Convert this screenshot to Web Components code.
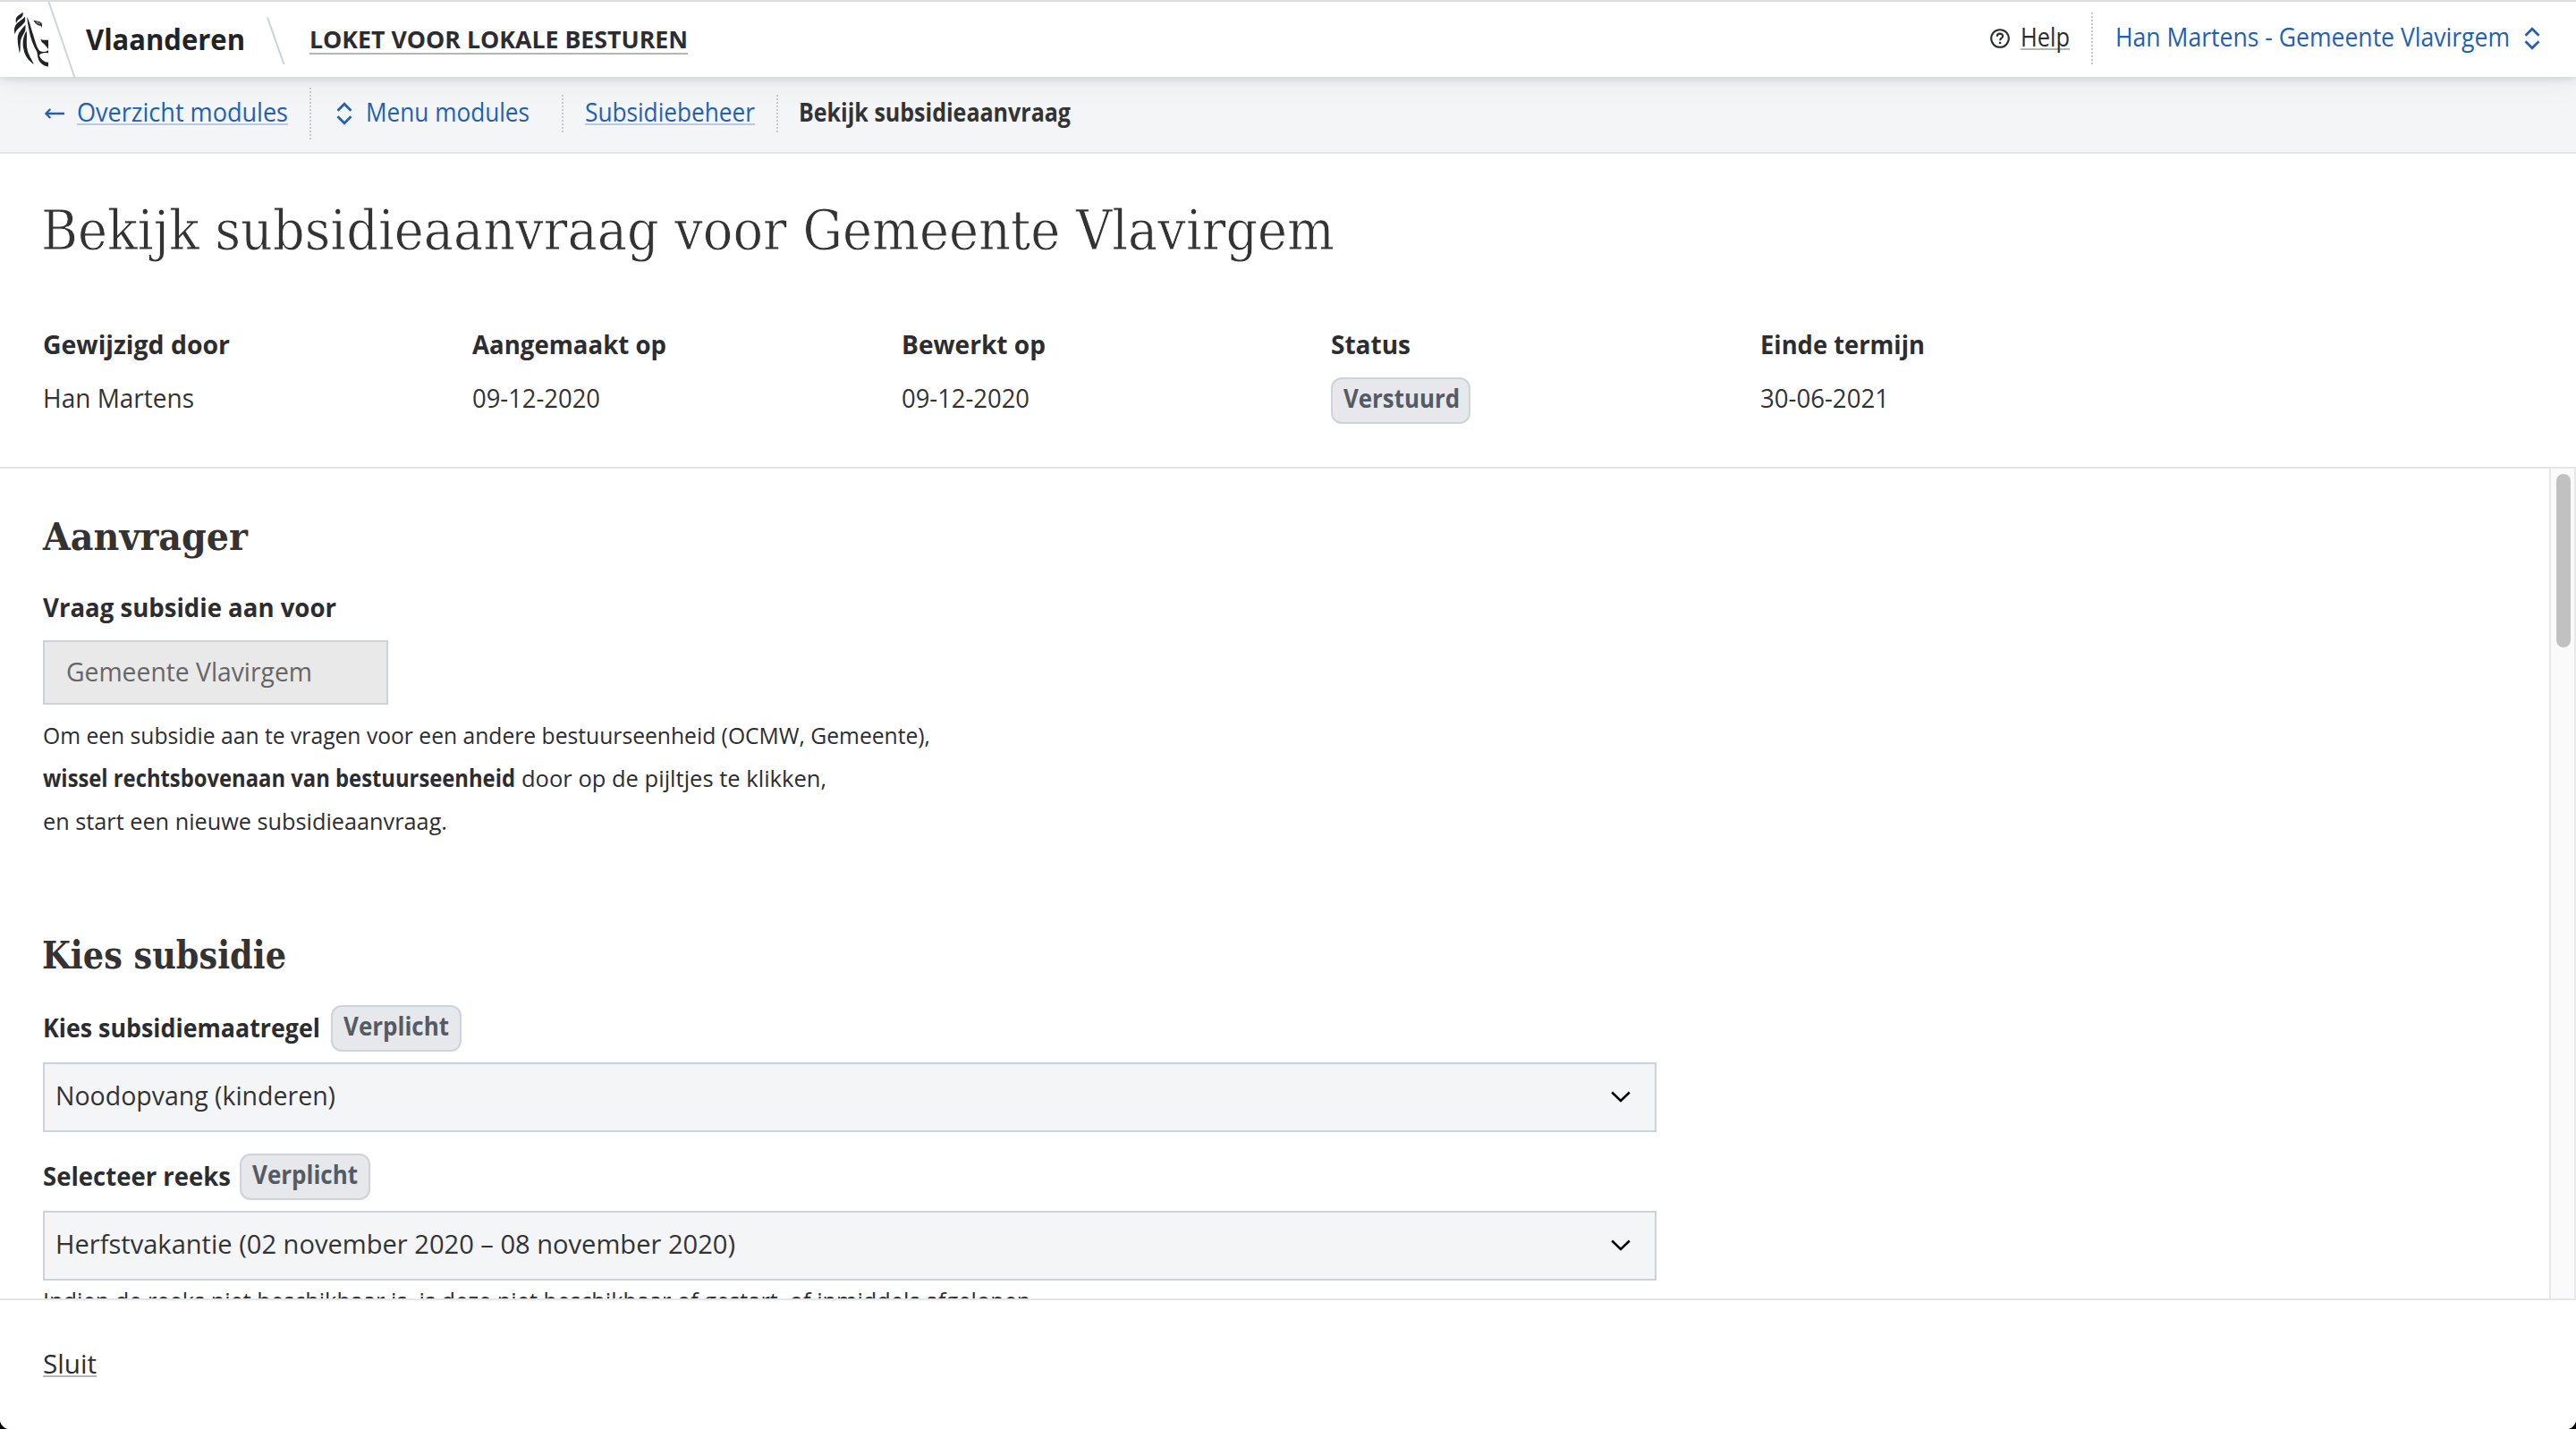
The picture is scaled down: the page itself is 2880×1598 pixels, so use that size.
<!DOCTYPE html>
<html lang="nl">
<head>
<meta charset="utf-8">
<title>Loket voor lokale besturen</title>
<style>
html,body{margin:0;background:#000}
body{font-family:"Open Sans","Noto Sans",sans-serif;color:#333}
</style>
</head>
<body>
<loket-app></loket-app>
<script>
const define = (name, html, extra) => {
  const t = document.createElement('template');
  t.innerHTML = html;
  customElements.define(name, class extends HTMLElement {
    constructor() {
      super();
      this.attachShadow({ mode: 'open' }).append(t.content.cloneNode(true));
    }
    connectedCallback() { if (extra) extra.call(this, this.shadowRoot); }
  });
};

/* One line of text set to a given advance width: w = width, s = font size, x = space before, y = space above */
define('fit-text', `<style>
:host{display:block;flex:none;height:40px;line-height:40px;font-size:29px;white-space:nowrap}
:host([b]){font-weight:700;color:#2b2d31}
:host([blue]){color:#2260b6}
:host([u]) span{text-decoration:underline;text-decoration-thickness:2px;text-underline-offset:var(--uo,2px);text-decoration-skip-ink:none;text-decoration-color:#b5b6b8}
:host([u][blue]) span{text-decoration-color:#b5cae8}
:host([serif]){font-family:"DejaVu Serif",serif;color:#333}
span{display:inline-block;transform-origin:0 50%}
</style><span><slot></slot></span>`, function (root) {
  const w = +this.getAttribute('w'), span = root.querySelector('span');
  if (this.hasAttribute('s')) this.style.fontSize = this.getAttribute('s') + 'px';
  if (this.hasAttribute('h')) this.style.height = this.style.lineHeight = this.getAttribute('h') + 'px';
  if (this.hasAttribute('x')) this.style.marginLeft = this.getAttribute('x') + 'px';
  if (this.hasAttribute('y')) this.style.marginTop = this.getAttribute('y') + 'px';
  this.style.width = w + 'px';
  span.style.transform = `scaleX(${w / span.getBoundingClientRect().width})`;
});

define('dotted-line', `<style>
:host{display:block;flex:none;width:2px;background:repeating-linear-gradient(#c6c9d0 0 2px,transparent 2px 4px)}
</style>`);

define('sort-icon', `<style>
:host{display:block;flex:none;width:18px;height:26px;color:#2260b6}svg{display:block}
</style><svg width="18" height="26" viewBox="0 0 18 26" fill="none" stroke="currentColor" stroke-width="2.7"><path d="M1.5 9.8 9 2.2l7.500 7.600M1.500 16.200 9 23.800l7.500-7.600"/></svg>`);

define('status-pill', `<style>
:host{display:block;flex:none;box-sizing:border-box;height:52px;width:var(--w);padding:1px 0 0 12px;border:2px solid #cdd3da;border-radius:12px;background:#e6e8ec}
::slotted(fit-text){color:#545b63!important}
</style><slot></slot>`);

define('select-box', `<style>
:host{display:flex;justify-content:space-between;box-sizing:border-box;width:1804px;height:78px;border:2px solid #cbd2da;background:#f3f5f7;padding:15px 27px 0 12px;color:#333}
svg{display:block;margin-top:15px}
</style><slot></slot><svg width="22" height="14" viewBox="0 0 22 14" fill="none" stroke="#000" stroke-width="2.500"><path d="M1.200 1.500 11 11l9.800-9.500"/></svg>`);

define('brand-bar', `<style>
:host{display:flex;box-sizing:border-box;height:86px;border-top:2px solid #dcdce2;background:#fff;align-items:flex-start;box-shadow:0 2px 10px rgba(0,0,0,.13),0 4px 36px rgba(0,0,0,.06);z-index:2;position:relative}
svg{display:block;flex:none}
.grow{flex:1}
</style>
<svg width="96" height="84" viewBox="0 2 96 84">
<path d="M54.500 2 83.300 86" stroke="#cfd4db" stroke-width="2" fill="none"/>
<g fill="#212326">
<path d="M25.500 13.500c-2.500 3-7 3.800-7.800 8.200-.2 1.800 0 3 .4 4.300 1.400-5 7-5.500 7.600-9.500z"/>
<path d="M28 18.500c-3 4-9.800 6.500-11.600 12-.8 2.500-.5 5 .3 7.800 1.500-7.300 10.500-10 11.500-15.300z"/>
<path d="M28.500 27.500c-3.300 4.500-8.500 8-8.800 15.500-.1 6 1.200 10.500 2.200 16.500 1.500-4 .4-7.500 1-12.500.8-7 5.500-10 5.600-15z"/>
<path d="M29.500 34.500c-3.600 6-4.900 13-2.900 21.500 1.500 7.500 5.900 12 11.200 16-2.300-6-6-10-7.300-17-1.500-8 .3-14-1-20.500z"/>
<path d="M30.300 19c2.700 5 4.800 14 7 20.500 2 6.500 3.500 12.500 6.200 16.500 2.200 2.300 5.500 2.300 8.500 1.500l2-1.500v3.400c-4.500-.8-8.500 0-10 2.300.6 3.600 5 7.600 10 8.100v4.600c-6-.5-9.500-4-11.200-8.600-.9-3-.8-5-1.600-8-4.200-7-7.300-16-8.700-24-1-5.500-2.200-10.500-2.200-14.800z"/>
<path d="M45.500 44c2 .7 4.500 1 8.500.8V55c-1.500-2.300-3.200-4.200-4.900-6-1-.8-3-1.700-3.600-5z"/>
<path d="M37.300 22.800c3.500.5 7.300.8 9.500 3.400.3 1.700.2 3.300-.1 4.800l-1.200-2.200c-3.800 0-6-2.600-8.200-6z"/></g>
<path d="M40.500 24.500c1 1.800 2.200 2.700 3.800 2.900.6-1-.5-2.200-1.600-2.600z" fill="#fff"/>
<circle cx="42.700" cy="26" r=".9" fill="#212326"/>
</svg>
<fit-text b w="178" s="32" x="0" y="22" style="color:#212326">Vlaanderen</fit-text>
<svg width="24" height="84" viewBox="296 2 24 84" style="margin-left:22px"><path d="M299 19.500 317.500 72" stroke="#cfd4db" stroke-width="2.200" fill="none"/></svg>
<fit-text b u w="423" s="27.500" x="26" y="22" style="--uo:5px">LOKET VOOR LOKALE BESTUREN</fit-text>
<div class="grow"></div>
<svg width="24" height="24" viewBox="0 0 24 24" style="margin-top:29px" fill="none" stroke="#2b2d31"><circle cx="12" cy="12" r="9.800" stroke-width="2.100"/><path d="M8.800 9.700c0-4 6.400-4 6.400-.3 0 2.300-3.100 2.300-3.100 4.800" stroke-width="2.100"/><path d="M12.100 15.800v2.300" stroke-width="2.300"/></svg>
<fit-text u w="55" x="11" y="19" style="color:#2b2d31;--uo:2px">Help</fit-text>
<dotted-line style="height:60px;margin:12px 0 0 24px"></dotted-line>
<fit-text blue w="441" x="25" y="19" s="28.500">Han Martens - Gemeente Vlavirgem</fit-text>
<sort-icon style="margin:28px 40px 0 16px"></sort-icon>`);

define('crumb-bar', `<style>
:host{display:flex;box-sizing:border-box;height:86px;border-bottom:2px solid #e4e6ea;background:#f3f5f7;align-items:flex-start}
svg{display:block;flex:none;margin:34px 0 0 49px}
</style>
<svg width="24" height="14" viewBox="0 0 24 14" fill="none" stroke="#2260b6" stroke-width="2.300"><path d="M23 7H3M7.300 2 2.400 7l4.900 5"/></svg>
<fit-text blue u w="236" x="13" y="19">Overzicht modules</fit-text>
<dotted-line style="height:60px;margin:12px 0 0 24px"></dotted-line>
<sort-icon style="margin:28px 0 0 28px"></sort-icon>
<fit-text blue w="183" x="15" y="19">Menu modules</fit-text>
<dotted-line style="height:44px;margin:20px 0 0 36px"></dotted-line>
<fit-text blue u w="190" x="24" y="19">Subsidiebeheer</fit-text>
<dotted-line style="height:44px;margin:20px 0 0 24px"></dotted-line>
<fit-text b w="304" x="23" y="19" s="28.500" style="color:#333">Bekijk subsidieaanvraag</fit-text>`);

define('meta-item', `<style>
:host{display:flex;flex-direction:column;width:480px;flex:none}
.v{margin-top:17px}
::slotted(fit-text:not([slot])){margin-top:3px}
</style><slot name="label"></slot><div class="v"><slot></slot></div>`);

define('page-head', `<style>
:host{display:block;box-sizing:border-box;height:352px;border-bottom:2px solid #e4e6ea;background:#fff;padding:46px 0 0 48px}
.row{display:flex;margin-top:67px}
h1{margin:0;font-weight:400;-webkit-text-stroke:.8px #fff}
</style>
<h1><fit-text serif w="1446" s="62" h="80" x="-2">Bekijk subsidieaanvraag voor Gemeente Vlavirgem</fit-text></h1>
<div class="row">
<meta-item><fit-text slot="label" b w="209">Gewijzigd door</fit-text><fit-text w="169">Han Martens</fit-text></meta-item>
<meta-item><fit-text slot="label" b w="217">Aangemaakt op</fit-text><fit-text w="143">09-12-2020</fit-text></meta-item>
<meta-item><fit-text slot="label" b w="161">Bewerkt op</fit-text><fit-text w="143">09-12-2020</fit-text></meta-item>
<meta-item><fit-text slot="label" b w="89">Status</fit-text><status-pill style="--w:156px"><fit-text b w="130" s="28">Verstuurd</fit-text></status-pill></meta-item>
<meta-item><fit-text slot="label" b w="184">Einde termijn</fit-text><fit-text w="144">30-06-2021</fit-text></meta-item>
</div>`);

define('request-form', `<style>
:host{display:flex;height:928px;overflow:hidden;background:#fff}
main{flex:1;padding-left:48px;color:#2b2d31}
h2{margin:0;font-size:inherit}
.input{box-sizing:border-box;width:386px;height:72px;margin-top:17px;padding:13px 0 0 24px;border:2px solid #cbd2da;background:#e9e9e9;color:#666}
.row{display:flex;align-items:flex-start}
select-box{margin-top:12px}
.bar{box-sizing:border-box;width:30px;border:solid #e8e8ea;border-width:0 2px;background:#fafafa;padding:6px 4px 0 6px}
.thumb{width:16px;height:194px;border-radius:8px;background:#c1c1c1}
</style>
<main>
<h2><fit-text serif b w="229" s="43" h="60" y="46">Aanvrager</fit-text></h2>
<fit-text b w="328" y="29">Vraag subsidie aan voor</fit-text>
<div class="input"><fit-text w="275">Gemeente Vlavirgem</fit-text></div>
<fit-text w="992" s="26" h="48" y="10">Om een subsidie aan te vragen voor een andere bestuurseenheid (OCMW, Gemeente),</fit-text>
<div class="row"><fit-text b w="528" s="26" h="48">wissel rechtsbovenaan van bestuurseenheid</fit-text><fit-text w="341" s="26" h="48" x="7">door op de pijltjes te klikken,</fit-text></div>
<fit-text w="452" s="26" h="48">en start een nieuwe subsidieaanvraag.</fit-text>
<h2><fit-text serif b w="273" s="43" h="60" y="96" x="-1">Kies subsidie</fit-text></h2>
<div class="row" style="margin-top:26px"><fit-text b w="310" y="5">Kies subsidiemaatregel</fit-text><status-pill style="--w:146px;margin-left:12px"><fit-text b w="118" s="28">Verplicht</fit-text></status-pill></div>
<select-box><fit-text w="313">Noodopvang (kinderen)</fit-text></select-box>
<div class="row" style="margin-top:24px"><fit-text b w="210" y="5">Selecteer reeks</fit-text><status-pill style="--w:146px;margin-left:10px"><fit-text b w="118" s="28">Verplicht</fit-text></status-pill></div>
<select-box><fit-text w="760">Herfstvakantie (02 november 2020 – 08 november 2020)</fit-text></select-box>
<fit-text w="1111" s="26" h="48" y="-2">Indien de reeks niet beschikbaar is, is deze niet beschikbaar of gestart, of inmiddels afgelopen.</fit-text>
</main>
<div class="bar"><div class="thumb"></div></div>`);

define('page-foot', `<style>
:host{display:block;flex:1;border-top:2px solid #e4e6ea;background:#fff;padding:51px 0 0 48px;color:#2b2d31}
</style><fit-text u w="60" style="--uo:2px">Sluit</fit-text>`);

define('loket-app', `<style>
:host{display:flex;flex-direction:column;width:2880px;height:1598px;overflow:hidden;border-radius:0 0 11px 11px;background:#fff}
</style>
<brand-bar></brand-bar><crumb-bar></crumb-bar><page-head></page-head><request-form></request-form><page-foot></page-foot>`);
</script>
</body>
</html>
